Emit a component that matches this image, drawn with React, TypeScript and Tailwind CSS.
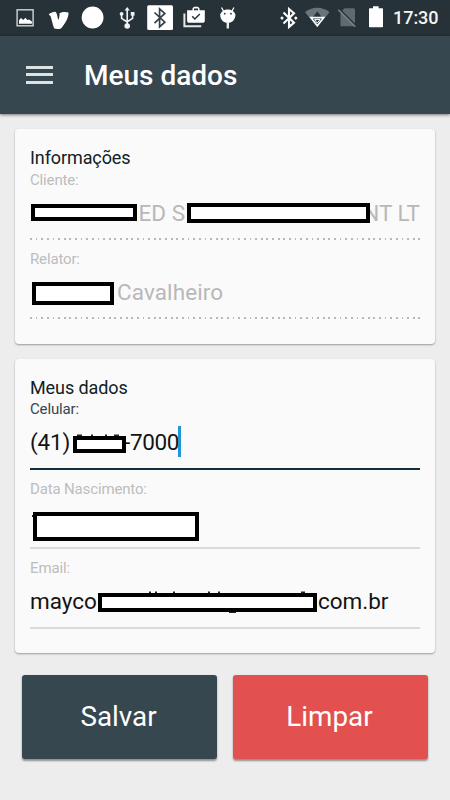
import React from 'react';

interface FieldProps {
    label: string;
    variant?: 'disabled' | 'active' | 'normal';
    children?: React.ReactNode;
}

// Dotted underline for read-only fields, solid for editable ones
const Underline: React.FC<{ variant: string }> = ({ variant }) => {
    if (variant === 'disabled') {
        return (
            <div className="mt-[10.4px] h-[2px] w-full bg-[repeating-linear-gradient(90deg,#b8b8b8_0px,#b8b8b8_1.8px,transparent_1.8px,transparent_5.63px)]" />
        );
    }
    if (variant === 'active') {
        return <div className="mt-[10.8px] h-[2.5px] w-full bg-[#102f3c]" />;
    }
    return <div className="mt-[10.8px] h-[2px] w-full bg-[#dadada]" />;
};

const Field: React.FC<FieldProps> = ({ label, variant = 'normal', children }) => (
    <div className="h-[79.5px]">
        <div className={`h-5 text-[15px] leading-5 tracking-[-0.15px] ${variant === 'active' ? 'text-[#37474f]' : 'text-[#bdbdbd]'}`}>
            {label}
        </div>
        <div
            className={`relative mt-2 flex h-[30px] whitespace-pre text-[22.5px] leading-[30px] ${
                variant === 'disabled' ? 'text-[#b8b8b8]' : 'text-[#141414]'
            }`}
        >
            {children}
        </div>
        <Underline variant={variant} />
    </div>
);

const Redaction: React.FC<{ className: string }> = ({ className }) => (
    <span className={`absolute border-4 border-black bg-white ${className}`} />
);

// Bits of the covered value that stick out around a redaction bar
const Specks: React.FC<{ d: string }> = ({ d }) => (
    <svg className="absolute left-0 top-0" width="390" height="36" fill="none" stroke="#222" strokeWidth="2">
        <path d={d} />
    </svg>
);

const Card: React.FC<{ title: string; className: string; children: React.ReactNode }> = ({ title, className, children }) => (
    <section className={`mx-[15px] rounded-[4px] bg-[#fafafa] px-[15px] shadow-[0_1px_2px_rgba(0,0,0,0.35)] ${className}`}>
        <h2 className="h-[22.5px] text-[18px] leading-[22px] tracking-[-0.1px] text-[#102027]">{title}</h2>
        {children}
    </section>
);

const StatusBar: React.FC = () => (
    <div className="h-9 bg-[#263238]">
        <svg width="450" height="36" viewBox="0 0 450 36" fill="none">
            {/* picture */}
            <rect x="17.1" y="9.8" width="16" height="16" stroke="#cfd6d8" strokeWidth="1.4" />
            <path d="M19 23.8V20.2L21 18l2.300 2 2.200-2.200 1.800 2.200 1.800-.5 2.800 2v2.300z" fill="#fff" />
            {/* v logo */}
            <path d="M48.700 14.300c2-1.600 4.300-2.500 6.500-2.500 1.700.4 2 4.500 3.100 8.200 1-2.200 1.300-4.200 1.200-6.800 2.500-1.400 6.200-1.500 8.900-.7.6 3-1.500 8-4.900 12.700l-2.500 3.300c-2.200.8-5.200.7-6.700.1-1.400-3-2.500-8.700-3.600-12.200z" fill="#fff" />
            <circle cx="92.600" cy="17.500" r="10.900" fill="#fff" />
            {/* usb */}
            <g stroke="#f0f2f2" strokeWidth="1.6">
                <path d="M127.200 9v16M121.600 14v4.400l5.600 3.600M132.600 14v4.400l-5.400 3.400" />
                <path d="M127.200 7l-2.600 3.500h5.200z" fill="#f0f2f2" stroke="none" />
                <circle cx="121.600" cy="13.800" r="1.900" fill="#f0f2f2" stroke="none" />
                <rect x="130.800" y="12" width="3.700" height="3.700" fill="#f0f2f2" stroke="none" />
                <circle cx="127.200" cy="26" r="2.800" fill="#f0f2f2" stroke="none" />
            </g>
            {/* bluetooth tile */}
            <rect x="147.200" y="5.300" width="25.800" height="24.700" rx="1.500" fill="#fff" />
            <path d="M154.500 12.500l10.300 9.700-5.200 4.600V8.800l5.200 4.600-10.300 9.700" stroke="#334148" strokeWidth="1.7" />
            {/* work bag */}
            <path d="M184.400 13.500v12.700h16.800" stroke="#e4e8e9" strokeWidth="2" />
            <path d="M189 10.300h3.500V8.200l1.500-1.500h4l1.500 1.500v2.100h5.300V21.500l-1.200 1.300H188.300l-1.200-1.300V10.300z" fill="#fff" />
            <rect x="194" y="8.500" width="4" height="1.800" fill="#263238" />
            <path d="M192.200 16.300l2.600 2.700 5-5" stroke="#263238" strokeWidth="1.5" />
            {/* android head */}
            <path d="M221.500 7.500l2 3.500M234 7.500l-2 3.500" stroke="#fff" strokeWidth="1.3" />
            <path d="M220.300 14.300c1-3.300 4.200-4.900 7.500-4.900s6.500 1.600 7.500 4.900c.5 4.800-3 8.700-7.500 8.700s-8-3.900-7.500-8.700z" fill="#fff" />
            <circle cx="224.700" cy="13.700" r=".9" fill="#263238" />
            <circle cx="231" cy="13.700" r=".9" fill="#263238" />
            <path d="M227.800 22v6.500" stroke="#e8ebec" strokeWidth="2.400" />
            {/* bluetooth connected */}
            <path d="M283.500 12.500l10.500 10.200-5 4.200V9l5 4.200-10.500 10.200" stroke="#fff" strokeWidth="2.100" />
            <path d="M282 16.300l1.800 1.800-1.800 1.800-1.800-1.800zM295.800 16.300l1.800 1.800-1.800 1.800-1.800-1.800z" fill="#fff" />
            {/* wifi */}
            <path d="M305 12.300c6.500-6.200 18-6.200 24.500 0L317.300 27.300z" fill="#69747a" />
            <path d="M317.300 11.500l-5 6.300h10z" fill="#263238" />
            <path d="M311 17.700h12.600l-6.300 8z" fill="#263238" stroke="#fff" strokeWidth="1.700" />
            <path d="M314.600 19.600h5.400l-2.700 3.500z" stroke="#fff" strokeWidth="1" />
            {/* no sim */}
            <path d="M344.500 8.300h9c.9 0 1.500.6 1.500 1.500v16.500h-14.500V12.300z" fill="#5e6a70" />
            <path d="M339.800 9.600l17 17" stroke="#263238" strokeWidth="2" />
            <path d="M338.300 9.800l17 17" stroke="#7b858a" strokeWidth="1.500" />
            {/* battery */}
            <path d="M370 8.300h3V6.300h5.600v2h3.400c.6 0 1 .4 1 1V26.300c0 .6-.4 1-1 1h-12c-.6 0-1-.4-1-1V9.300c0-.6.4-1 1-1z" fill="#fff" />
            <text x="393" y="24.400" fill="#f4f6f6" fontSize="18" fontWeight="500" textLength="45.500" className="font-['Roboto',sans-serif]">17:30</text>
        </svg>
    </div>
);

const buttonClass = 'h-[84px] w-[195px] rounded-[3px] pr-[2px] text-[27.8px] leading-[84px] text-center text-white shadow-[0_1.5px_2px_rgba(0,0,0,0.4)]';

export default function App() {
    return (
        <div className="h-[800px] w-[450px] overflow-hidden bg-[#ededed] font-['Roboto',sans-serif]">
            <StatusBar />

            <header className="flex h-[78px] items-center bg-[#37474f] pl-[26px] shadow-[0_1px_3px_rgba(0,0,0,0.5)]">
                <div className="mb-px flex w-[27px] flex-col gap-[4.5px]">
                    <span className="h-[3px] bg-[#dfe2e3]" />
                    <span className="h-[3px] bg-[#dfe2e3]" />
                    <span className="h-[3px] bg-[#dfe2e3]" />
                </div>
                <h1 className="ml-[31px] mt-[2px] text-[28px] font-medium leading-8 text-white">Meus dados</h1>
            </header>

            <Card title="Informações" className="mt-[15px] h-[215px] pt-[18px]">
                <Field label="Cliente:" variant="disabled">
                    <span className="ml-[108.5px]">ED S</span>
                    <span className="ml-auto">NT LT</span>
                    <Redaction className="left-[1px] top-[6px] h-[17px] w-[106px]" />
                    <Redaction className="left-[156.5px] top-[5px] h-[20px] w-[183.5px]" />
                </Field>
                <Field label="Relator:" variant="disabled">
                    <span className="ml-[87px] tracking-[0.1px]">Cavalheiro</span>
                    <Redaction className="left-[2px] top-[5px] h-[23px] w-[82px]" />
                </Field>
            </Card>

            <Card title="Meus dados" className="mt-[15px] h-[294px] pt-[17.5px]">
                <Field label="Celular:" variant="active">
                    <span className="tracking-[-0.2px]">(41)</span>
                    <span className="ml-[54px] tracking-[-0.35px]">-7000</span>
                    <Specks d="M47 8.500h5M61 8.500h2M75 8.500h2M84 8.500h5" />
                    <span className="absolute left-[148px] top-[-1px] h-[31px] w-[2.5px] bg-[#2196d8]" />
                    <Redaction className="left-[43px] top-[9px] h-[17px] w-[53px]" />
                </Field>
                <Field label="Data Nascimento:">
                    <Specks d="M2 9h2" />
                    <Redaction className="left-[3px] top-[5px] h-[29px] w-[165.500px]" />
                </Field>
                <Field label="Email:">
                    <span>mayco</span>
                    <span className="ml-[221px]">com.br</span>
                    <Specks d="M119 6.500h2M125 6.500h2M143 6.500h2M178 6.500h2M188 6.500h2M271 6.500h4M199 26h7" />
                    <Redaction className="left-[67.500px] top-[6.500px] h-[19px] w-[219px]" />
                </Field>
            </Card>

            <div className="mt-[21.500px] flex gap-4 pl-[22px]">
                <button className={`${buttonClass} bg-[#37474f]`}>Salvar</button>
                <button className={`${buttonClass} bg-[#e25050]`}>Limpar</button>
            </div>
        </div>
    );
}
